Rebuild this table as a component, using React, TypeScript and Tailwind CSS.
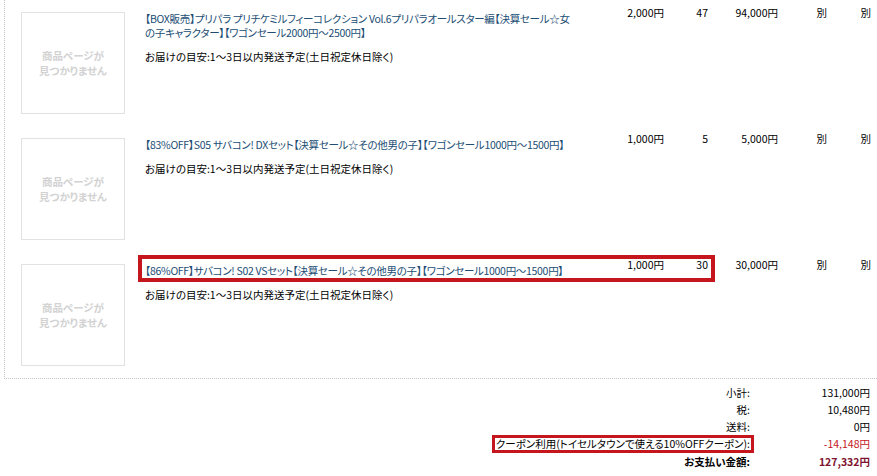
// App.tsx
// Cart item list with order summary

const delivery = 'お届けの目安:1～3日以内発送予定(土日祝定休日除く)';

const items = [
  {
    title: [
      '【BOX販売】プリパラ プリチケミルフィーコレクション Vol.6プリパラオールスター編【決算セール☆女',
      'の子キャラクター】【ワゴンセール2000円～2500円】',
    ],
    price: '2,000円',
    qty: '47',
    total: '94,000円',
    marked: false,
  },
  {
    title: ['【83%OFF】S05 サバコン! DXセット【決算セール☆その他男の子】【ワゴンセール1000円～1500円】'],
    price: '1,000円',
    qty: '5',
    total: '5,000円',
    marked: false,
  },
  {
    title: ['【86%OFF】サバコン! S02 VSセット【決算セール☆その他男の子】【ワゴンセール1000円～1500円】'],
    price: '1,000円',
    qty: '30',
    total: '30,000円',
    marked: true,
  },
];

const summary = [
  { label: '小計:', value: '131,000円', valueClass: 'text-black' },
  { label: '税:', value: '10,480円', valueClass: 'text-black' },
  { label: '送料:', value: '0円', valueClass: 'text-black' },
  { label: 'クーポン利用(トイセルタウンで使える10%OFFクーポン):', value: '-14,148円', valueClass: 'text-[#c4161c]', marked: true },
  { label: 'お支払い金額:', value: '127,332円', valueClass: 'text-[#7d1230] font-bold', bold: true },
];

function NoImage() {
  return (
    <div className="mt-[9px] ml-[16px] w-[104px] h-[102px] shrink-0 border border-[#e2e2e2] flex flex-col items-center justify-center text-[10.5px] leading-[15px] font-bold text-[#d2d2d2]">
      <span>商品ページが</span>
      <span>見つかりません</span>
    </div>
  );
}

export default function App() {
  return (
    <div className="w-[877px] h-[476px] bg-white overflow-hidden text-[10.5px] text-black font-['Noto_Sans_CJK_JP','Noto_Sans',sans-serif] [font-feature-settings:'palt']">
      {/* item rows */}
      <div className="ml-[4px] h-[379px] pt-[3px] border-l border-b border-dotted border-[#c4c4c4]">
        {items.map((item) => (
          <div key={item.qty} className="h-[126px] flex items-start">
            <NoImage />
            <div className="ml-[13px] flex flex-col">
              <div className="flex items-start">
                <div
                  className={`flex items-start border-4 px-[3px] ${
                    item.marked ? 'border-[#c4161c]' : 'border-transparent'
                  }`}
                >
                  <div className="w-[444px] pt-[5px] leading-[14px] tracking-[-0.3px] text-[#214d73] whitespace-nowrap">
                    {item.title.map((line) => (
                      <div key={line}>{line}</div>
                    ))}
                  </div>
                  <div className="w-[75px] text-right leading-[12px]">{item.price}</div>
                  <div className="w-[44px] text-right leading-[12px]">{item.qty}</div>
                </div>
                <div className="w-[63px] pt-[4px] text-right leading-[12px]">{item.total}</div>
                <div className="w-[49px] pt-[4px] text-right leading-[12px]">別</div>
                <div className="w-[44px] pt-[4px] text-right leading-[12px]">別</div>
              </div>
              <div className="ml-[7px] mt-[6px] leading-[14px]">{delivery}</div>
            </div>
          </div>
        ))}
      </div>

      {/* order summary */}
      <div className="pt-[5px] flex flex-col">
        {summary.map((row) => (
          <div key={row.label} className="flex justify-end leading-[17px] pr-[7px]">
            <div className={`text-right ${row.bold ? 'font-bold' : ''}`}>
              {row.marked ? (
                <span className="inline-block -mr-[4px] border-[3px] border-[#c4161c] px-[1px] leading-[12px]">
                  {row.label}
                </span>
              ) : (
                row.label
              )}
            </div>
            <div className={`w-[120px] text-right ${row.valueClass}`}>{row.value}</div>
          </div>
        ))}
      </div>
    </div>
  );
}
